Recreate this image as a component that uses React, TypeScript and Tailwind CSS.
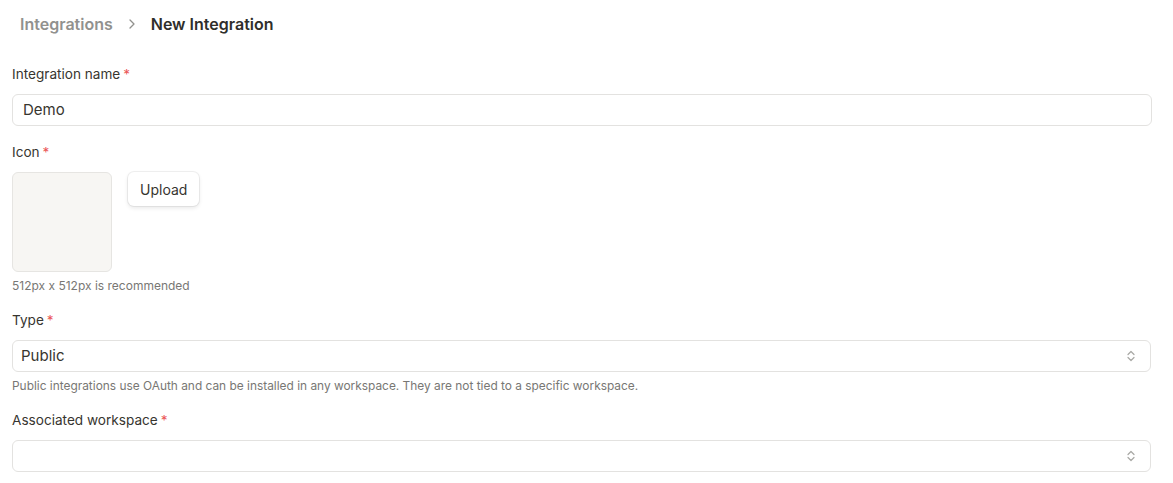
import React from "react";

function Label({ children }: { children: React.ReactNode }) {
  return (
    <div className="mb-2.5 flex h-5 items-center text-[13.6px] leading-5 text-[#37352f]">
      <span>{children}</span>
      <span className="ml-[3px] text-[#eb5757]">*</span>
    </div>
  );
}

function Chevrons() {
  return (
    <svg width="10" height="12" viewBox="0 0 10 12" fill="none" stroke="#a8a8a5" strokeWidth="1.2" strokeLinecap="round" strokeLinejoin="round">
      <path d="M2 4.5 L5 1.5 L8 4.5" />
      <path d="M2 7.5 L5 10.5 L8 7.5" />
    </svg>
  );
}

function Select({ value }: { value?: string }) {
  return (
    <div className="mr-[10px] flex h-8 items-center justify-between rounded-md border border-[#e3e2e0] bg-white pl-2 pr-3.5 text-[15px] text-[#37352f]">
      <span>{value ?? ""}</span>
      <Chevrons />
    </div>
  );
}

export default function App() {
  return (
    <div className="min-h-[483px] bg-white font-['Inter','Liberation_Sans',sans-serif] antialiased">
      <div className="flex h-12 items-center pl-5 text-[16px] font-semibold">
        <span className="text-[#91918e]">Integrations</span>
        <svg className="mx-[13px]" width="12" height="12" viewBox="0 0 12 12" fill="none" stroke="#91918e" strokeWidth="1.3" strokeLinecap="round" strokeLinejoin="round">
          <path d="M4 2 L8 6 L4 10" />
        </svg>
        <span className="text-[#2f2e2b]">New Integration</span>
      </div>

      <div className="px-3 pt-4">
        <div className="mb-4">
          <Label>Integration name</Label>
          <div className="mr-[9px] flex h-8 items-center rounded-md border border-[#e3e2e0] bg-white px-2.5 text-[15px] text-[#37352f]">
            Demo
          </div>
        </div>

        <div className="mb-4">
          <Label>Icon</Label>
          <div className="flex items-start gap-4">
            <div className="h-[100px] w-[100px] rounded-md border border-[#e6e5e2] bg-[#f7f6f3]" />
            <button className="h-[34px] rounded-md bg-white px-3 text-[14px] text-[#37352f] shadow-[0_0_0_1px_rgba(15,15,15,0.06),0_2px_4px_rgba(15,15,15,0.1)]">
              Upload
            </button>
          </div>
          <div className="mt-1.5 text-[12px] leading-4 text-[#787774]">512px x 512px is recommended</div>
        </div>

        <div className="mb-4">
          <Label>Type</Label>
          <Select value="Public" />
          <div className="mt-1.5 text-[11.9px] leading-4 text-[#787774]">
            Public integrations use OAuth and can be installed in any workspace. They are not tied to a specific workspace.
          </div>
        </div>

        <div>
          <Label>Associated workspace</Label>
          <Select />
        </div>
      </div>
    </div>
  );
}
